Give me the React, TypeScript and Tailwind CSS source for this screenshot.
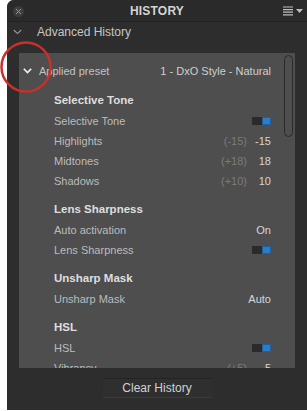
import React from "react";

type Row =
  | { kind: "head"; label: string; first?: boolean }
  | { kind: "row"; label: string; value?: string; prev?: string; toggle?: boolean };

const ROWS: Row[] = [
  { kind: "head", label: "Selective Tone", first: true },
  { kind: "row", label: "Selective Tone", toggle: true },
  { kind: "row", label: "Highlights", prev: "(-15)", value: "-15" },
  { kind: "row", label: "Midtones", prev: "(+18)", value: "18" },
  { kind: "row", label: "Shadows", prev: "(+10)", value: "10" },
  { kind: "head", label: "Lens Sharpness" },
  { kind: "row", label: "Auto activation", value: "On" },
  { kind: "row", label: "Lens Sharpness", toggle: true },
  { kind: "head", label: "Unsharp Mask" },
  { kind: "row", label: "Unsharp Mask", value: "Auto" },
  { kind: "head", label: "HSL" },
  { kind: "row", label: "HSL", toggle: true },
  { kind: "row", label: "Vibrancy", prev: "(+5)", value: "5" },
];

const Toggle: React.FC = () => (
  <div className="flex h-[8px] w-[19px] rounded-[1px] overflow-hidden bg-[#2a2a2a]">
    <div className="flex-1" />
    <div className="w-[9px] bg-[#2d7cc6] border border-[#1f5f9c]" />
  </div>
);

const HistoryRow: React.FC<{ row: Row }> = ({ row }) => {
  if (row.kind === "head") {
    return (
      <div
        className={`h-5 flex items-center pl-[35px] text-[11.5px] font-bold text-[#dedede] ${
          row.first ? "mt-[10px]" : "mt-[9px]"
        }`}
      >
        {row.label}
      </div>
    );
  }
  return (
    <div className="h-5 flex items-center pl-[35px] pr-[24px] text-[11px]">
      <span className="flex-1 text-[#bcbcbc]">{row.label}</span>
      {row.prev && <span className="text-[#7c7c7c] mr-[4px]">{row.prev}</span>}
      {row.toggle ? (
        <Toggle />
      ) : (
        <span className="min-w-[20px] text-right text-[#d6d6d6]">{row.value}</span>
      )}
    </div>
  );
};

export default function App() {
  return (
    <div className="relative w-[307px] h-[411px] bg-white overflow-hidden font-['Liberation_Sans',Arial,sans-serif]">
      <div className="ml-[7px] h-[410px] rounded-tl-[7px] bg-[#2d2d2d] flex flex-col overflow-hidden">
        {/* title bar */}
        <div className="relative h-[22px] flex items-center justify-center bg-[#2a2a2a] border-b border-[#222]">
          <div className="absolute left-[6px] top-[6px] w-[11px] h-[11px] rounded-full bg-[#3e3e3e] flex items-center justify-center">
            <svg width="7" height="7" viewBox="0 0 7 7">
              <path d="M1 1L6 6M6 1L1 6" stroke="#9a9a9a" strokeWidth="1" />
            </svg>
          </div>
          <span className="text-[12px] font-bold text-[#d4d4d4] tracking-[0.2px]">HISTORY</span>
          <div className="absolute right-[4px] top-[6px] flex items-start gap-[2px]">
            <svg width="11" height="10" viewBox="0 0 11 10">
              <path d="M0 1H10M0 3.6H10M0 6.2H10M0 8.8H10" stroke="#bdbdbd" strokeWidth="1.2" />
            </svg>
            <svg width="7" height="4" viewBox="0 0 7 4" className="mt-[3px]">
              <path d="M0 0H7L3.5 4Z" fill="#bdbdbd" />
            </svg>
          </div>
        </div>

        {/* advanced history */}
        <div className="h-[20px] flex items-center">
          <svg width="9" height="6" viewBox="0 0 9 6" className="ml-[6px]">
            <path d="M0.8 1L4.5 4.6L8.2 1" stroke="#9c9c9c" strokeWidth="1.1" fill="none" />
          </svg>
          <span className="ml-[15px] text-[12px] text-[#c6c6c6]">Advanced History</span>
        </div>

        {/* preset panel */}
        <div className="relative mt-[11px] mx-[12px] h-[315px] bg-[#4e4e4e] overflow-hidden">
          <div className="mt-[8px] h-5 flex items-center pr-[24px] text-[11px]">
            <svg width="9" height="6" viewBox="0 0 9 6" className="ml-[4px]">
              <path d="M0.8 0.8L4.5 4.6L8.2 0.8" stroke="#f2f2f2" strokeWidth="1.6" fill="none" />
            </svg>
            <span className="ml-[7px] flex-1 text-[#c4c4c4]">Applied preset</span>
            <span className="text-[#cfcfcf]">1 - DxO Style - Natural</span>
          </div>
          {ROWS.map((r, i) => (
            <HistoryRow key={i} row={r} />
          ))}
          <div className="absolute right-[2px] top-[2px] w-[9px] h-[82px] rounded-full border-[1.5px] border-[#2a2a2a]" />
        </div>

        {/* footer */}
        <div className="mt-[10px] flex justify-center">
          <button className="w-[109px] h-[20px] bg-[#2f2f2f] border-t border-[#232323] border-b border-b-[#3a3a3a] text-[12px] text-[#d2d2d2]">
            Clear History
          </button>
        </div>
      </div>

      {/* annotation circle */}
      <svg className="absolute left-0 top-[40px]" width="56" height="56" viewBox="0 0 56 56">
        <circle cx="26" cy="27" r="24.5" stroke="#c8302b" strokeWidth="2.5" fill="none" />
      </svg>
    </div>
  );
}
